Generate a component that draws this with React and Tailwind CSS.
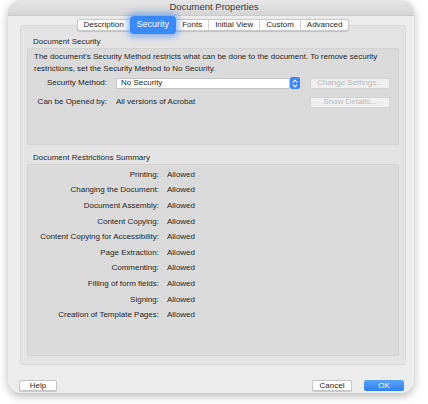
import React from "react";

const tabs = ["Description", "Security", "Fonts", "Initial View", "Custom", "Advanced"];

const restrictions = [
  "Printing",
  "Changing the Document",
  "Document Assembly",
  "Content Copying",
  "Content Copying for Accessibility",
  "Page Extraction",
  "Commenting",
  "Filling of form fields",
  "Signing",
  "Creation of Template Pages",
];

const Stepper = () => (
  <div className="w-[10px] h-[12px] rounded-[2px] bg-[#3c87f4] flex items-center justify-center">
    <svg width="6" height="9" viewBox="0 0 6 9" fill="none">
      <path d="M1 3.2 L3 1.2 L5 3.2" stroke="white" strokeWidth="1.1" strokeLinecap="round" strokeLinejoin="round" />
      <path d="M1 5.8 L3 7.8 L5 5.8" stroke="white" strokeWidth="1.1" strokeLinecap="round" strokeLinejoin="round" />
    </svg>
  </div>
);

export default function App() {
  return (
    <div className="w-[428px] h-[404px] bg-white font-['Liberation_Sans',Arial,sans-serif] text-[#262626] overflow-hidden">
      <div className="ml-[8px] w-[406px] h-[393px] rounded-[13px] bg-[#ececec] shadow-[0_3px_10px_rgba(0,0,0,0.28)] flex flex-col overflow-hidden">
        {/* Title bar */}
        <div className="h-[16px] shrink-0 bg-gradient-to-b from-[#e6e6e6] to-[#d4d4d4] border-b border-[#c9c9c9] flex items-center justify-center pl-[6px] text-[9.5px] text-[#3a3a3a]">
          Document Properties
        </div>

        {/* Tabs */}
        <div className="relative z-10 mt-[3px] -mb-[6px] flex justify-center pl-[4px]">
          <div className="flex h-[12px] items-center bg-white border border-[#c8c8c8] rounded-[3px] text-[8px] shadow-[0_0.5px_1px_rgba(0,0,0,0.15)]">
            {tabs.map((t, i) =>
              t === "Security" ? (
                <div
                  key={t}
                  className="h-[18px] px-[7px] flex items-center rounded-[4px] bg-[#3b89f7] text-white text-[9px] shadow-[0_0_6px_3px_rgba(59,137,247,0.55)]"
                >
                  {t}
                </div>
              ) : (
                <div
                  key={t}
                  className={`h-full px-[6px] flex items-center ${i > 2 ? "border-l border-[#d4d4d4]" : ""}`}
                >
                  {t}
                </div>
              )
            )}
          </div>
        </div>

        {/* Tab panel */}
        <div className="ml-[12px] mr-[8px] h-[340px] bg-[#e3e3e3] border border-[#d8d8d8] rounded-[3px] pl-[6px] pr-[6px] pt-[11px]">
          <div className="h-[10px] leading-[10px] text-[8px] pl-[6px]">Document Security</div>
          <div className="mt-[1px] h-[97px] bg-[#dadada] border border-[#d2d2d2] rounded-[2px] pt-[2px] pl-[6px] text-[8px]">
            <p className="leading-[12px]">
              The document's Security Method restricts what can be done to the document. To remove security
              <br />
              restrictions, set the Security Method to No Security.
            </p>
            <div className="mt-[2px] flex items-center h-[12px]">
              <div className="w-[73px] text-right">Security Method:</div>
              <div className="ml-[9px] flex items-center">
                <div className="w-[174px] h-[11px] bg-white border border-[#c6c6c6] rounded-[2px] flex items-center pl-[4px]">
                  No Security
                </div>
                <Stepper />
              </div>
              <div className="ml-[10px] w-[80px] h-[11px] bg-[#efefef] border border-[#d3d3d3] rounded-[2px] flex items-center justify-center text-[#b9b9b9]">
                Change Settings...
              </div>
            </div>
            <div className="mt-[7px] flex items-center h-[12px]">
              <div className="w-[73px] text-right">Can be Opened by:</div>
              <div className="ml-[9px] w-[184px]">All versions of Acrobat</div>
              <div className="ml-[10px] w-[80px] h-[11px] bg-[#efefef] border border-[#d3d3d3] rounded-[2px] flex items-center justify-center text-[#b9b9b9]">
                Show Details...
              </div>
            </div>
          </div>

          <div className="mt-[8px] h-[10px] leading-[10px] text-[8px] pl-[6px]">Document Restrictions Summary</div>
          <div className="mt-[1px] h-[192px] bg-[#dadada] border border-[#d2d2d2] rounded-[2px] pt-[2px] text-[8px]">
            {restrictions.map((r) => (
              <div key={r} className="h-[15.6px] flex items-center">
                <div className="w-[131px] text-right">{r}:</div>
                <div className="ml-[8px]">Allowed</div>
              </div>
            ))}
          </div>
        </div>

        {/* Footer buttons */}
        <div className="mt-[15px] flex items-center h-[11px] text-[8px]">
          <div className="ml-[11px] w-[38px] h-[11px] bg-white border border-[#c6c6c6] rounded-[2px] flex items-center justify-center shadow-[0_0.5px_1px_rgba(0,0,0,0.15)]">
            Help
          </div>
          <div className="ml-auto w-[40px] h-[11px] bg-white border border-[#c6c6c6] rounded-[2px] flex items-center justify-center shadow-[0_0.5px_1px_rgba(0,0,0,0.15)]">
            Cancel
          </div>
          <div className="ml-[12px] mr-[10px] w-[40px] h-[11px] rounded-[2px] bg-gradient-to-b from-[#5aa2f8] to-[#2f7ff0] text-white flex items-center justify-center">
            OK
          </div>
        </div>
      </div>
    </div>
  );
}
